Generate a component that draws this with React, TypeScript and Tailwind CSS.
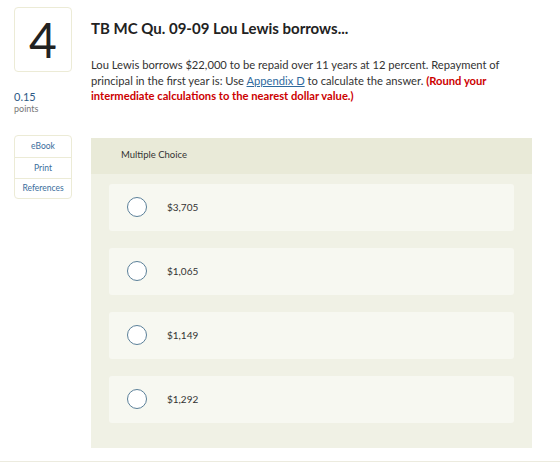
import React from "react";

const choices = ["$3,705", "$1,065", "$1,149", "$1,292"];

export default function App() {
  return (
    <div className="relative h-[466px] w-[560px] overflow-hidden bg-white font-['Lato',sans-serif] text-[#333]">
      <div className="flex pl-[14px] pt-[7px]">
        <div className="w-[58px] shrink-0">
          <div className="flex h-[65px] items-center justify-center rounded-[4px] border border-[#ecebd6] text-[48px] leading-none text-[#222]">
            4
          </div>
          <div className="mt-[18px] text-[11px] leading-[13px] text-[#2c5a86]">0.15</div>
          <div className="text-[9px] leading-[11px] text-[#777]">points</div>

          <div className="mt-[21px] flex flex-col rounded-[4px] border border-[#ecebd6] text-center text-[8.5px] text-[#3a6d9c]">
            <div className="h-[21px] leading-[21px]">eBook</div>
            <div className="h-[21px] border-t border-[#ecebd6] leading-[20px]">Print</div>
            <div className="h-[20px] border-t border-[#ecebd6] leading-[19px]">References</div>
          </div>
        </div>

        <div className="ml-[19px] w-[441px]">
          <h1 className="mt-[12px] text-[15px] font-bold leading-[18px] text-[#222]">
            TB MC Qu. 09-09 Lou Lewis borrows...
          </h1>
          <p className="mt-[20px] pr-[30px] text-[11.2px] leading-[15.5px] text-[#333]">
            Lou Lewis borrows $22,000 to be repaid over 11 years at 12 percent. Repayment of principal in the first year is: Use{" "}
            <span className="text-[#2f6a9e] underline">Appendix D</span> to calculate the answer.{" "}
            <span className="font-bold text-[#cc0000]">
              (Round your intermediate calculations to the nearest dollar value.)
            </span>
          </p>

          <div className="mt-[34px] bg-[#f0f1e5] pb-[25px]">
            <div className="flex h-[36px] items-center bg-[#e9ead8] pl-[30px] text-[9.5px] text-[#333]">
              Multiple Choice
            </div>
            <div className="flex flex-col gap-[17px] px-[18px] pt-[10px]">
              {choices.map((c) => (
                <div key={c} className="flex h-[47px] items-center rounded-[3px] bg-[#f7f8f1] pl-[18px]">
                  <span className="h-[20px] w-[20px] rounded-full border border-[#5b8099] bg-white" />
                  <span className="ml-[20px] text-[10px] text-[#333]">{c}</span>
                </div>
              ))}
            </div>
          </div>
        </div>
      </div>
      <div className="absolute bottom-[4px] left-0 h-px w-full bg-[#ecebdf]" />
    </div>
  );
}
